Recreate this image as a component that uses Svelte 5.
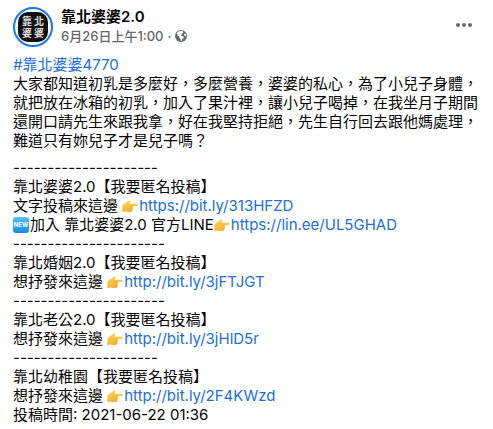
<script lang="ts">
  type Line = {
    isNew?: boolean;
    text: string;
    link?: string;
  };

  const page = { name: '靠北婆婆2.0', time: '6月26日上午1:00' };
  const avatarGlyphs = ['靠', '北', '婆', '婆'];

  const story =
    '大家都知道初乳是多麼好，多麼營養，婆婆的私心，為了小兒子身體，就把放在冰箱的初乳，加入了果汁裡，讓小兒子喝掉，在我坐月子期間還開口請先生來跟我拿，好在我堅持拒絕，先生自行回去跟他媽處理，難道只有妳兒子才是兒子嗎？';

  const lines: Line[] = [
    { text: '-'.repeat(21) },
    { text: '靠北婆婆2.0【我要匿名投稿】' },
    { text: '文字投稿來這邊 ', link: 'https://bit.ly/313HFZD' },
    { isNew: true, text: '加入 靠北婆婆2.0 官方LINE', link: 'https://lin.ee/UL5GHAD' },
    { text: '-'.repeat(22) },
    { text: '靠北婚姻2.0【我要匿名投稿】' },
    { text: '想抒發來這邊 ', link: 'http://bit.ly/3jFTJGT' },
    { text: '-'.repeat(22) },
    { text: '靠北老公2.0【我要匿名投稿】' },
    { text: '想抒發來這邊 ', link: 'http://bit.ly/3jHlD5r' },
    { text: '-'.repeat(21) },
    { text: '靠北幼稚園【我要匿名投稿】' },
    { text: '想抒發來這邊 ', link: 'http://bit.ly/2F4KWzd' },
    { text: '投稿時間: 2021-06-22 01:36' }
  ];
</script>

{#snippet pointer()}
  <svg class="emoji" viewBox="0 0 16 16" aria-hidden="true">
    <defs>
      <linearGradient id="skin" x1="0" y1="0" x2="0" y2="1">
        <stop offset="0" stop-color="#ffd54a" />
        <stop offset="1" stop-color="#f7b23a" />
      </linearGradient>
    </defs>
    <path
      d="M.4 7.8C1.6 6.1 3.4 5.1 5 4.100L6.700 2.700c1-.7 2.100.1 1.600 1.200L7.300 5.700h7.300c1.600 0 1.600 2.300 0 2.300H10.400c1 .3 1 1.800.1 2.100.7.5.5 1.700-.3 2 .4.600 0 1.600-.9 1.700-1.900.3-4.400.3-5.800-.4C2 13.700.9 13.900.4 14Z"
      fill="url(#skin)"
    />
    <path
      d="M6.900 5.900 6 7M10.300 8.200H7.600M10.300 10.200H7.500M10 12.200H7.500"
      fill="none"
      stroke="#e09a2a"
      stroke-width=".5"
      stroke-linecap="round"
    />
  </svg>
{/snippet}

<article class="post">
  <header class="header">
    <a class="avatar" href="#page" aria-label={page.name}>
      <span class="logo">
        {#each avatarGlyphs as glyph}
          <span>{glyph}</span>
        {/each}
      </span>
    </a>
    <div class="info">
      <a class="name" href="#page">{page.name}</a>
      <div class="meta">
        <a href="#post">{page.time}</a>
        <span>·</span>
        <svg class="globe" viewBox="0 0 12 12" aria-hidden="true">
          <circle cx="6" cy="6" r="6" fill="#65676b" />
          <path
            d="M5.200.9 8 1.200 8.400 2.300 7.300 3.200 6.800 4.400 5.400 4.900 6.300 5.800 8 6.100 8.900 7.200 8.200 8.500 7.200 9.100 6.600 10.900 5.700 10.900 5.500 8.900 4.500 7.900 4.300 6.600 2.700 5.700 2.500 4.200 1.500 3.700C2.200 2.200 3.600 1.100 5.200.9ZM9.200 3.700 10.700 3.800C11.100 4.700 11.200 5.700 11 6.600L9.800 6.100 9.100 5Z"
            fill="#fff"
          />
        </svg>
      </div>
    </div>
    <button class="more" aria-label="More">
      <svg width="20" height="20" viewBox="0 0 20 20" fill="currentColor">
        <circle cx="4" cy="10" r="2" />
        <circle cx="10" cy="10" r="2" />
        <circle cx="16" cy="10" r="2" />
      </svg>
    </button>
  </header>

  <div class="content">
    <a href="#tag">#靠北婆婆4770</a>
    <p>{story}</p>
  </div>

  <div class="content">
    {#each lines as line}
      <div class="line">
        {#if line.isNew}
          <svg class="emoji" viewBox="0 0 16 16" aria-label="NEW">
            <defs>
              <linearGradient id="badge" x1="0" y1="0" x2="0" y2="1">
                <stop offset="0" stop-color="#58bdf8" />
                <stop offset="1" stop-color="#1689e4" />
              </linearGradient>
            </defs>
            <rect width="16" height="16" rx="3" fill="url(#badge)" />
            <text x="8" y="10" text-anchor="middle" class="badge-text">NEW</text>
          </svg>
        {/if}<span>{line.text}</span>{#if line.link}{@render pointer()}<a href={line.link}>{line.link}</a>{/if}
      </div>
    {/each}
  </div>
</article>

<style>
  :global(body) {
    background: #fff;
  }

  .post {
    padding: 7px 12px 5px 13px;
    font-family: Inter, 'Noto Sans CJK TC', sans-serif;
    font-size: 15px;
    line-height: 19px;
    color: #050505;
  }

  a {
    color: #216fdb;
    text-decoration: none;
  }

  a:hover {
    text-decoration: underline;
  }

  .header {
    display: flex;
    align-items: center;
    gap: 8px;
    margin-bottom: 8px;
  }

  .avatar {
    display: flex;
    align-items: center;
    justify-content: center;
    box-sizing: border-box;
    width: 40px;
    height: 40px;
    border: 2px solid #1877f2;
    border-radius: 50%;
  }

  .avatar:hover {
    text-decoration: none;
  }

  .logo {
    display: grid;
    grid-template-columns: 12px 12px;
    grid-auto-rows: 12px;
    place-content: center;
    width: 30px;
    height: 30px;
    border-radius: 10px;
    background: #111;
    color: #ddd;
    font-size: 10px;
    font-weight: 700;
    line-height: 12px;
    text-align: center;
  }

  .info {
    flex: 1;
    padding-bottom: 2px;
  }

  .name {
    display: block;
    color: #050505;
    font-weight: 600;
    line-height: 20px;
  }

  .meta {
    display: flex;
    align-items: center;
    gap: 4px;
    color: #65676b;
    font-size: 13px;
    font-weight: 500;
    line-height: 18px;
  }

  .meta a {
    color: inherit;
  }

  .globe {
    width: 12px;
    height: 12px;
  }

  .more {
    display: flex;
    padding: 0 7px 4px;
    border: none;
    background: transparent;
    color: #65676b;
    cursor: pointer;
  }

  .content + .content {
    margin-top: 8px;
  }

  p {
    margin: 0;
  }

  .line {
    display: flex;
    align-items: center;
    white-space: pre;
  }

  .emoji {
    flex: none;
    width: 16px;
    height: 16px;
    margin-right: 1px;
  }

  .badge-text {
    fill: #fff;
    font-size: 6px;
    font-weight: 700;
  }
</style>
